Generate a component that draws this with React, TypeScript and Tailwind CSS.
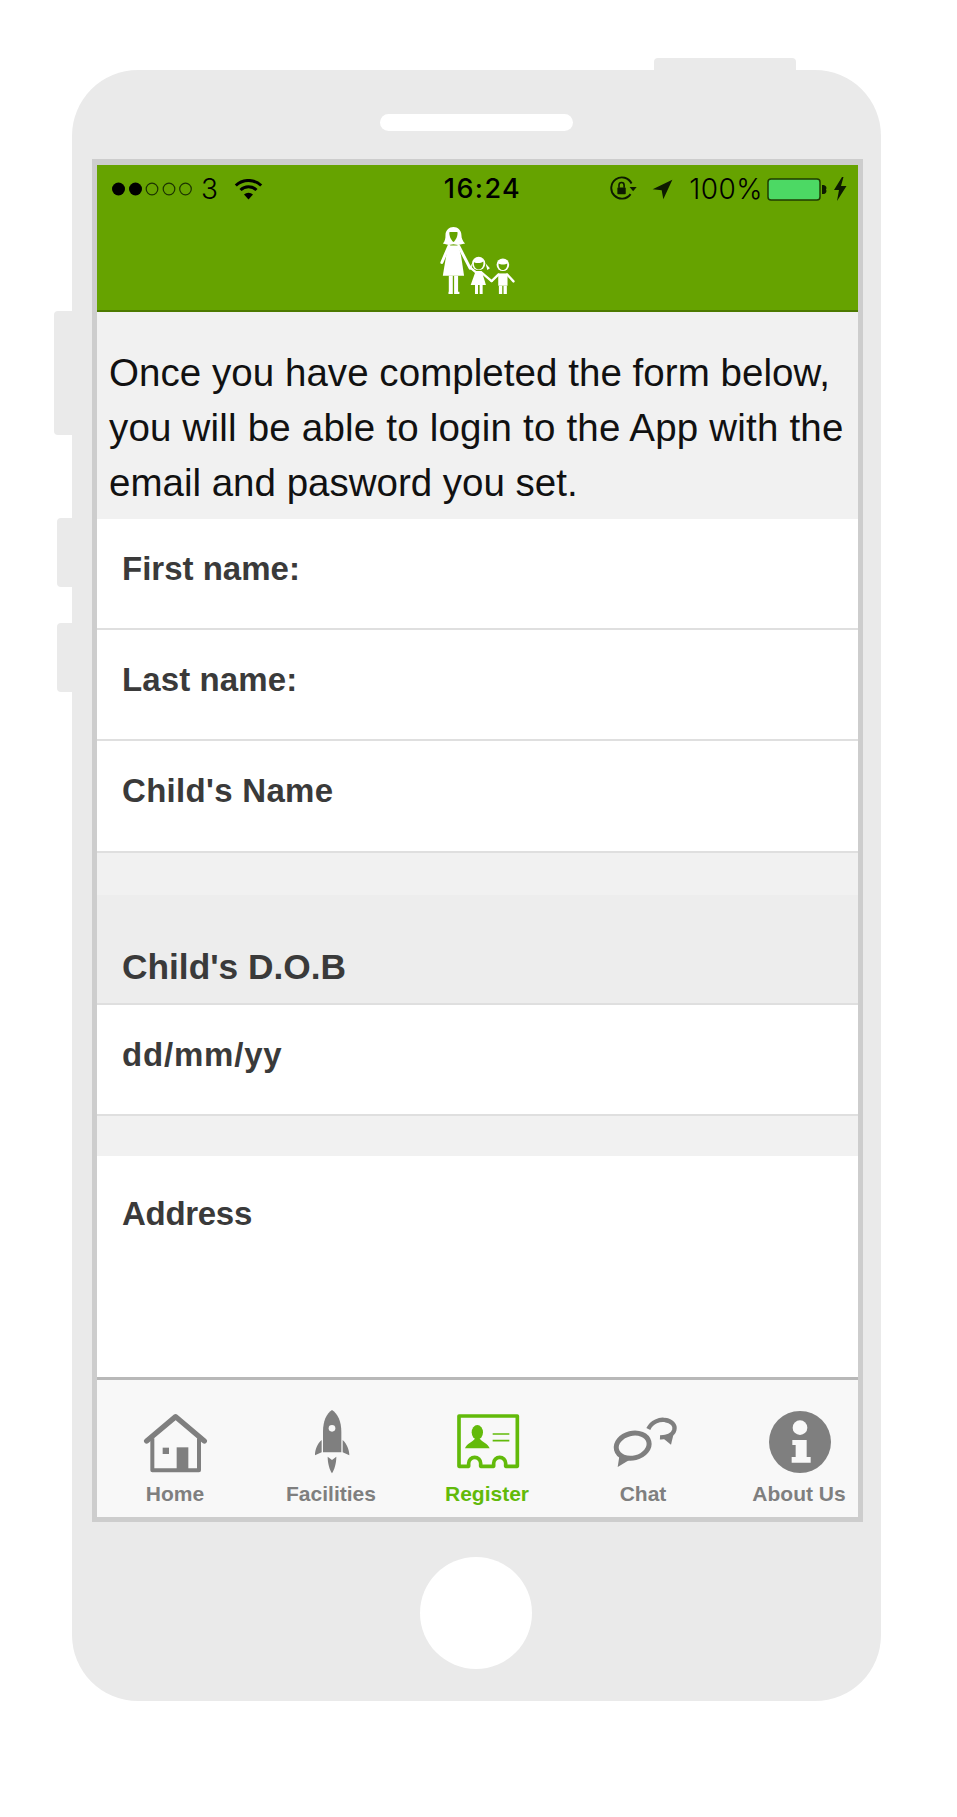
import React from "react";

const Sans = "font-['Liberation_Sans',Arial,sans-serif]";

function Family() {
  return (
    <svg width="75" height="69" viewBox="60 45 225 208" className="block mx-auto mt-[13px]" fill="#fff" stroke="none">
      {/* mother */}
      <path d="M100 48C113 48 124 58 124 72C124 82 128 90 135 98L114 102L100 100L86 102L68 98C75 90 76 82 76 72C76 58 87 48 100 48Z" />
      <path d="M88 63H112C114 72 108 88 100 93C92 88 86 72 88 63Z" fill="#66a300" />
      <path d="M86 104H115L123 135L132 195H68L78 135Z" />
      <path d="M86 106L65 155M116 106L150 172" stroke="#fff" strokeWidth="9" strokeLinecap="round" fill="none" />
      <path d="M86 195H98V246H86ZM102 195H114V246H102ZM85 243H98V250H85ZM102 243H118V250H102Z" />
      {/* girl */}
      <circle cx="176" cy="158" r="20" />
      <path d="M162 154C170 158 182 158 190 152C192 165 186 175 176 176C166 175 160 165 162 154Z" fill="#66a300" />
      <path d="M155 158L148 172L156 176ZM197 158L210 172L202 178Z" />
      <path d="M167 181H185L198 223H152Z" />
      <path d="M168 185L150 170M184 185L215 211" stroke="#fff" strokeWidth="7" strokeLinecap="round" fill="none" />
      <path d="M165 223H174V250H165ZM179 223H188V250H179Z" />
      {/* boy */}
      <circle cx="249" cy="162" r="19" />
      <path d="M236 158C242 162 256 162 262 158C263 170 257 177 249 178C241 177 235 170 236 158Z" fill="#66a300" />
      <path d="M235 188H263V225H235Z" />
      <path d="M236 191L215 211M262 191L281 212" stroke="#fff" strokeWidth="7" strokeLinecap="round" fill="none" />
      <path d="M237 225H247V250H237ZM251 225H261V250H251Z" />
    </svg>
  );
}

function StatusBar() {
  return (
    <div className="flex items-center h-[48px] pl-[14px] pr-[11px] text-black">
      <div className="flex-1 flex items-center">
        <svg width="84" height="16" viewBox="0 0 84 16" className="block">
          <circle cx="7.5" cy="8" r="6.5" fill="#000" />
          <circle cx="24.5" cy="8" r="6.5" fill="#000" />
          <circle cx="41" cy="8" r="5.8" fill="none" stroke="#1c3300" strokeWidth="1.2" />
          <circle cx="58" cy="8" r="5.8" fill="none" stroke="#1c3300" strokeWidth="1.2" />
          <circle cx="74.5" cy="8" r="5.8" fill="none" stroke="#1c3300" strokeWidth="1.2" />
        </svg>
        <span className="ml-[6px] text-[28px] leading-[32px] font-light font-['Inter',sans-serif]">3</span>
        <svg width="29" height="21" viewBox="0 0 29 21" className="block ml-[16px]">
          <path d="M14.5 20.5L10 15.5A6.5 6.5 0 0 1 19 15.5Z" fill="#000" />
          <path d="M6.5 11A11.5 11.5 0 0 1 22.5 11M1.8 6.5A18.5 18.5 0 0 1 27.2 6.5" fill="none" stroke="#000" strokeWidth="3" />
        </svg>
      </div>
      <span className="ml-[7px] text-[27px] leading-[32px] font-medium tracking-[1.4px] font-['Inter',sans-serif]">16:24</span>
      <div className="flex-1 flex items-center justify-end">
        <svg width="28" height="26" viewBox="26 33 87 78" className="block">
          <path d="M96 55A33 33 0 1 0 93 88" fill="none" stroke="#0d1a00" strokeWidth="6" />
          <path d="M90 66H112L101 79Z" fill="#0d1a00" />
          <rect x="52" y="67" width="26" height="21" rx="2" fill="#0d1a00" />
          <path d="M57 68V60A8 8 0 0 1 73 60V68" fill="none" stroke="#0d1a00" strokeWidth="5" />
        </svg>
        <svg width="21" height="21" viewBox="155 41 65 64" className="block ml-[15px]">
          <path d="M157 72L218 43L190 103L185 75Z" fill="#0d1a00" />
        </svg>
        <span className="ml-[16px] text-[28px] leading-[32px] font-light tracking-[0.5px] font-['Inter',sans-serif]">100%</span>
        <svg width="60" height="23" viewBox="0 0 60 23" className="block ml-[4px]">
          <rect x="1" y="1" width="52" height="21" rx="3" fill="#4cd964" stroke="#1f3d00" strokeWidth="1.5" />
          <path d="M55 7H56.5A3 3 0 0 1 59 11.5A3 3 0 0 1 56.5 16H55Z" fill="#0d1a00" />
        </svg>
        <svg width="14" height="24" viewBox="0 0 14 24" className="block ml-[6px]">
          <path d="M9 0L1 13H6L4 24L13.5 9H8L10.5 0Z" fill="#0d1a00" />
        </svg>
      </div>
    </div>
  );
}

function Field({ label, tall, labelClass }: { label: string; tall?: boolean; labelClass?: string }) {
  return (
    <div className={`bg-white border-b-2 border-[#dfdfdf] px-[25px] pt-[30px] ${tall ? "h-[112px]" : "h-[111px]"}`}>
      <span className={`block text-[33px] leading-[40px] font-bold text-[#3a3a3a] ${labelClass ?? ""}`}>{label}</span>
    </div>
  );
}

function HomeIcon() {
  return (
    <svg width="76" height="70" viewBox="171 135 228 210" className="block mx-auto">
      <path d="M200 243L287 170L373 243" fill="none" stroke="#7f7f7f" strokeWidth="16" strokeLinecap="round" strokeLinejoin="round" />
      <path d="M217 235V331H357V235" fill="none" stroke="#7f7f7f" strokeWidth="12" strokeLinejoin="round" />
      <rect x="290" y="262" width="35" height="70" fill="#7f7f7f" />
      <rect x="248" y="263" width="19" height="19" fill="#7f7f7f" />
    </svg>
  );
}

function RocketIcon() {
  return (
    <svg width="76" height="70" viewBox="636 135 228 210" className="block mx-auto">
      <path d="M753 150C770 160 781 185 781 215V277H726V215C726 185 736 160 753 150Z" fill="#7f7f7f" />
      <circle cx="753" cy="205" r="10" fill="#f8f8f8" />
      <path d="M722 240C708 252 702 270 702 286L722 277ZM785 240C798 252 805 270 805 286L785 277Z" fill="#7f7f7f" />
      <path d="M740 290L753 300L766 290C766 310 760 330 753 340C746 330 740 310 740 290Z" fill="#7f7f7f" />
    </svg>
  );
}

function RegisterIcon() {
  const c = "#62ba0a";
  return (
    <svg width="76" height="70" viewBox="-3 0 228 210" className="block mx-auto">
      <path d="M27 33H202V184H167V175A18 18 0 0 0 131 175V184H92V175A18 18 0 0 0 56 175V184H27Z" fill="none" stroke={c} strokeWidth="11" strokeLinejoin="round" />
      <ellipse cx="82" cy="82" rx="17" ry="22" fill={c} />
      <path d="M45 130C50 116 68 110 74 102H90C96 110 114 116 119 130Z" fill={c} />
      <path d="M128 87H178M128 107H178" stroke={c} strokeWidth="5" />
    </svg>
  );
}

function ChatIcon() {
  const c = "#7f7f7f";
  return (
    <svg width="76" height="70" viewBox="0 0 228 210" className="block mx-auto">
      <ellipse cx="83" cy="122" rx="50" ry="37" transform="rotate(-14 83 122)" fill="none" stroke={c} strokeWidth="15" />
      <path d="M44 148L74 164L38 186Z" fill={c} />
      <path d="M130 72C140 50 165 42 180 45C200 48 212 60 208 75C204 90 185 98 165 97" fill="none" stroke={c} strokeWidth="13" />
      <path d="M165 92L205 90L198 119Z" fill={c} />
    </svg>
  );
}

function InfoIcon() {
  return (
    <svg width="76" height="70" viewBox="3 0 228 210" className="block mx-auto">
      <circle cx="120" cy="111" r="93" fill="#7f7f7f" />
      <circle cx="120" cy="68" r="22" fill="#f8f8f8" />
      <path d="M97 105H140V156H152V173H95V156H107V120H97Z" fill="#f8f8f8" />
    </svg>
  );
}

function Tab({ label, active, children }: { label: string; active?: boolean; children: React.ReactNode }) {
  return (
    <div className="flex flex-col items-center">
      {children}
      <span className={`mt-[6px] text-[21px] leading-[26px] font-bold whitespace-nowrap ${active ? "text-[#62ba0a]" : "text-[#7f7f7f]"}`}>{label}</span>
    </div>
  );
}

export default function App() {
  return (
    <div className={`w-[957px] h-[1817px] bg-white pt-[70px] pl-[72px] overflow-hidden ${Sans}`}>
      <div className="relative w-[809px] h-[1631px] bg-[#eaeaea] rounded-[66px] pt-[44px] flex flex-col">
        {/* hardware buttons */}
        <div className="absolute left-[582px] top-[-12px] w-[142px] h-[12px] bg-[#eaeaea] rounded-t-[4px]" />
        <div className="absolute left-[-18px] top-[241px] w-[18px] h-[124px] bg-[#eaeaea] rounded-l-[4px]" />
        <div className="absolute left-[-15px] top-[448px] w-[15px] h-[69px] bg-[#eaeaea] rounded-l-[4px]" />
        <div className="absolute left-[-15px] top-[553px] w-[15px] h-[69px] bg-[#eaeaea] rounded-l-[4px]" />

        <div className="w-[193px] h-[17px] bg-white rounded-full ml-[308px]" />

        <div className="mt-[28px] ml-[20px] w-[771px] h-[1363px] border-[5px] border-t-[6px] border-[#cdcdcd] flex flex-col overflow-hidden bg-[#f1f1f1]">
          <header className="h-[147px] shrink-0 bg-[#66a300] border-b-2 border-[#4d7a00]">
            <StatusBar />
            <Family />
          </header>

          <p className="pl-[12px] pt-[33px] pb-[9px] text-[38.5px] leading-[55px] text-[#111] whitespace-nowrap">
            <span className="tracking-[0.05px]">Once you have completed the form below,</span>
            <br />
            <span className="tracking-[0.2px]">you will be able to login to the App with the</span>
            <br />
            email and pasword you set.
          </p>

          <Field label="First name:" />
          <Field label="Last name:" labelClass="tracking-[0.1px]" />
          <Field label="Child's Name" tall labelClass="tracking-[0.3px]" />

          <div className="h-[42px] shrink-0" />
          <div className="h-[110px] shrink-0 bg-[#ededed] border-b-2 border-[#dfdfdf] px-[25px] pt-[52px]">
            <span className="block text-[35.3px] leading-[40px] font-bold text-[#3a3a3a]">Child's D.O.B</span>
          </div>
          <Field label="dd/mm/yy" labelClass="tracking-[0.8px]" />
          <div className="h-[40px] shrink-0" />

          <div className="flex-1 bg-white px-[25px] pt-[38px]">
            <span className="block text-[33px] leading-[40px] font-bold tracking-[-0.3px] text-[#3a3a3a]">Address</span>
          </div>

          <nav className="h-[140px] shrink-0 bg-[#f8f8f8] border-t-[3px] border-[#b8b8b8] pt-[25px] overflow-hidden">
            <div className="grid grid-cols-[repeat(5,156px)] w-[780px]">
              <Tab label="Home"><HomeIcon /></Tab>
              <Tab label="Facilities"><RocketIcon /></Tab>
              <Tab label="Register" active><RegisterIcon /></Tab>
              <Tab label="Chat"><ChatIcon /></Tab>
              <Tab label="About Us"><InfoIcon /></Tab>
            </div>
          </nav>
        </div>

        <div className="w-[112px] h-[112px] rounded-full bg-white ml-[348px] mt-[35px] shrink-0" />
      </div>
    </div>
  );
}
